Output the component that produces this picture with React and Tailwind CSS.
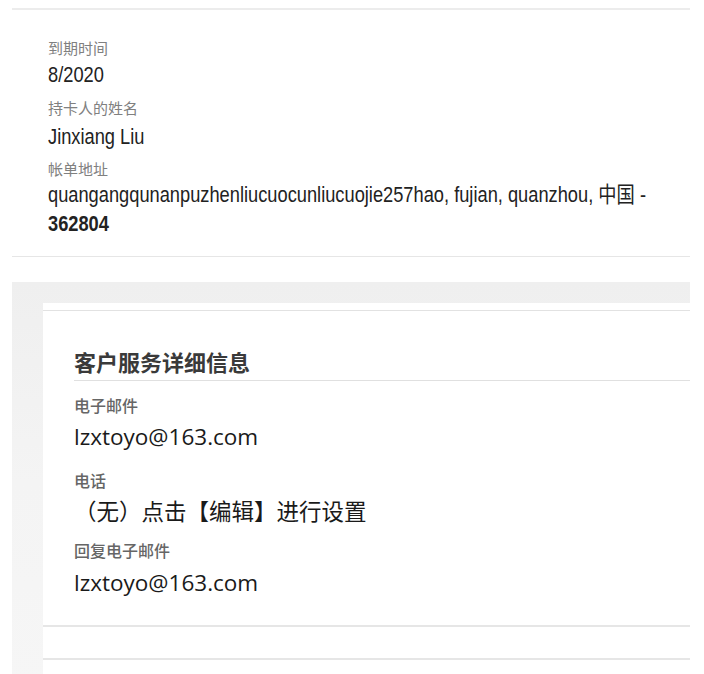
export default function App() {
  const lib = { fontFamily: '"Liberation Sans", "Noto Sans CJK SC", sans-serif' };
  return (
    <div className="w-[704px] h-[674px] bg-white overflow-hidden">
      {/* Top card section */}
      <div className="ml-[12px] w-[678px] mt-[8px] border-t-2 border-[#ececec] pt-[28px] pl-[36px] pb-[18px] border-b border-b-[#e6e6e6]" style={lib}>
        <div className="text-[15px] leading-[20px] text-[#808080] font-['Noto_Sans_CJK_SC']">到期时间</div>
        <div className="mt-[4px] text-[22px] leading-[26px] text-[#222] whitespace-nowrap origin-left scale-x-[0.83]">8/2020</div>
        <div className="mt-[10px] text-[15px] leading-[20px] text-[#808080] font-['Noto_Sans_CJK_SC']">持卡人的姓名</div>
        <div className="mt-[6px] text-[22px] leading-[26px] text-[#222] whitespace-nowrap origin-left scale-x-[0.83]">Jinxiang Liu</div>
        <div className="mt-[9px] text-[15px] leading-[20px] text-[#808080] font-['Noto_Sans_CJK_SC']">帐单地址</div>
        <div className="mt-[1px] text-[22px] leading-[29px] text-[#222] whitespace-nowrap origin-left scale-x-[0.83]">
          quangangqunanpuzhenliucuocunliucuojie257hao, fujian, quanzhou, 中国 -
          <br />
          <span className="font-bold">362804</span>
        </div>
      </div>

      {/* Customer service section */}
      <div className="ml-[12px] w-[678px] mt-[25px] pt-[21px] pl-[31px] bg-gradient-to-b from-[#efefef] via-[#f4f4f4] to-[#f6f6f6] h-[400px]">
        <div className="bg-white pt-[7px] font-['Noto_Sans_CJK_SC','Open_Sans',sans-serif]">
          <div className="border-t border-[#e2e2e2] pt-[35px] pl-[31px] pb-[27px]">
            <div className="text-[22px] leading-[30px] font-bold text-[#3a3a3a] pb-[4px] border-b border-[#e0e0e0]">客户服务详细信息</div>
            <div className="mt-[13px] text-[16px] leading-[22px] font-medium text-[#666]">电子邮件</div>
            <div className="mt-[6px] text-[22.5px] leading-[30px] text-[#1a1a1a] font-['Open_Sans','Noto_Sans_CJK_SC',sans-serif]">lzxtoyo@163.com</div>
            <div className="mt-[17px] text-[16px] leading-[22px] font-medium text-[#666]">电话</div>
            <div className="mt-[4px] text-[22.5px] leading-[30px] text-[#1a1a1a]">（无）点击【编辑】进行设置</div>
            <div className="mt-[14px] text-[16px] leading-[22px] font-medium text-[#666]">回复电子邮件</div>
            <div className="mt-[7px] text-[22.5px] leading-[30px] text-[#1a1a1a] font-['Open_Sans','Noto_Sans_CJK_SC',sans-serif]">lzxtoyo@163.com</div>
          </div>
          <div className="border-t-2 border-[#e6e6e6] h-[33px]" />
          <div className="border-t-2 border-[#e6e6e6] h-[40px]" />
        </div>
      </div>
    </div>
  );
}
